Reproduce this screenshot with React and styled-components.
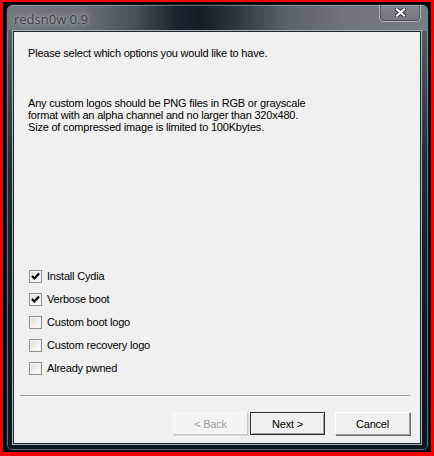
import React from 'react';
import styled, { createGlobalStyle } from 'styled-components';

const GlobalStyle = createGlobalStyle`
    html, body {
        margin: 0;
        padding: 0;
        overflow: hidden;
        background: #ff0000;
    }
`;

const Page = styled.div`
    width: 434px;
    height: 456px;
    box-sizing: border-box;
    padding: 2px 3px 4px 3px;
    background: #f40000;
    display: flex;
`;

const Desktop = styled.div`
    flex: 1;
    display: flex;
    padding: 2px 2px 1px 3px;
    background: #000;
`;

const Window = styled.div`
    flex: 1;
    display: flex;
    flex-direction: column;
    border-radius: 7px 7px 6px 6px;
    border: 1px solid #1a1e24;
    box-shadow: inset 0 0 0 1px rgba(190, 200, 210, 0.45);
    background: linear-gradient(180deg, #676c72 0%, #4d545d 10%, #222c38 35%, #101a25 70%, #0d1721 100%);
    overflow: hidden;
`;

const TitleBar = styled.div`
    height: 26px;
    display: flex;
    align-items: flex-start;
    padding-left: 7px;
    padding-right: 7px;
    background: linear-gradient(90deg, #71767c 0%, #6a6f75 18%, #4a515a 30%, #1c2431 40%, #141c28 46%, #2c343f 54%, #5b6168 66%, #6f747a 80%, #787d83 100%);
    box-shadow: inset 0 1px 0 rgba(200, 210, 220, 0.4);
`;

const Title = styled.span`
    flex: 1;
    margin-top: 6px;
    font-family: "Open Sans", "Noto Sans", sans-serif;
    font-size: 13px;
    line-height: 16px;
    color: #3a3f45;
    text-shadow: 0 0 7px rgba(225, 230, 235, 0.8), 0 0 3px rgba(225, 230, 235, 0.5);
`;

const CloseButton = styled.div`
    width: 42px;
    height: 18px;
    margin-top: -1px;
    box-sizing: border-box;
    display: flex;
    align-items: center;
    justify-content: center;
    border: 1px solid rgba(215, 222, 230, 0.55);
    border-top: none;
    border-radius: 0 0 5px 5px;
    background: linear-gradient(180deg, rgba(150, 156, 163, 0.35), rgba(110, 116, 123, 0.25));
    box-shadow: inset 0 0 0 1px rgba(40, 45, 52, 0.5);
`;

const Panel = styled.div`
    flex: 1;
    margin: 0 7px 6px 6px;
    display: flex;
    flex-direction: column;
    background: #f0f0f0;
    border: 1px solid #1d2732;
    box-shadow: 0 0 0 1px #a8b1bb;
    font-family: "Liberation Sans", Arial, sans-serif;
    font-size: 11px;
    letter-spacing: -0.2px;
    color: #000;
`;

const Heading = styled.p`
    margin: 15px 0 0 14px;
    line-height: 13px;
`;

const Notes = styled.p`
    margin: 37px 0 0 14px;
    line-height: 12px;
`;

const Options = styled.div`
    margin: auto 0 0 15px;
    display: flex;
    flex-direction: column;
`;

const OptionRow = styled.label`
    height: 23px;
    display: flex;
    align-items: center;
    gap: 5px;
    line-height: 13px;
`;

const Box = styled.span`
    width: 13px;
    height: 13px;
    box-sizing: border-box;
    display: flex;
    align-items: center;
    justify-content: center;
    border: 1px solid #8e8f8f;
    background: linear-gradient(135deg, #dcdcdc 0%, #f2f2f2 60%, #fbfbfb 100%);
    box-shadow: inset 0 0 0 1px #f4f4f4;
`;

const Separator = styled.div`
    margin: 15px 10px 0 6px;
    height: 0;
    border-top: 1px solid #a0a0a0;
    border-bottom: 1px solid #ffffff;
`;

const ButtonRow = styled.div`
    display: flex;
    justify-content: flex-end;
    margin: 15px 10px 8px 0;
`;

const Button = styled.button`
    width: 75px;
    height: 23px;
    margin-left: ${p => p.$gap}px;
    box-sizing: border-box;
    padding: 0;
    font-family: "Liberation Sans", Arial, sans-serif;
    font-size: 11px;
    letter-spacing: -0.2px;
    color: ${p => (p.disabled ? '#a0a0a0' : '#000')};
    background: ${p => (p.disabled ? '#f4f4f4' : '#f0f0f0')};
    border: 1px solid;
    border-color: ${p => (p.$default ? '#2b2b2b' : p.disabled ? '#f8f8f8 #c8c8c8 #c8c8c8 #f8f8f8' : '#ffffff #a0a0a0 #a0a0a0 #ffffff')};
    box-shadow: ${p => (p.$default ? 'inset 1px 1px 0 #fff, inset -1px -1px 0 #a0a0a0' : p.disabled ? '1px 1px 0 #d8d8d8' : '1px 1px 0 #696969')};
`;

const Check = () => (
    <svg width="9" height="9" viewBox="0 0 9 9">
        <path d="M1 4 L3.4 6.5 L8 1.5" fill="none" stroke="#000" strokeWidth="2.2" />
    </svg>
);

const CloseGlyph = () => (
    <svg width="11" height="9" viewBox="0 0 11 9">
        <path d="M2 1.5 L9 7.5 M9 1.5 L2 7.5" stroke="#2a2f36" strokeWidth="4" strokeLinecap="square" />
        <path d="M2 1.5 L9 7.5 M9 1.5 L2 7.5" stroke="#ffffff" strokeWidth="2.2" strokeLinecap="square" />
    </svg>
);

const options = [
    { label: 'Install Cydia', checked: true },
    { label: 'Verbose boot', checked: true },
    { label: 'Custom boot logo', checked: false },
    { label: 'Custom recovery logo', checked: false },
    { label: 'Already pwned', checked: false },
];

const App = () => (
    <Page>
        <GlobalStyle />
        <Desktop>
            <Window>
                <TitleBar>
                    <Title>redsn0w 0.9</Title>
                    <CloseButton><CloseGlyph /></CloseButton>
                </TitleBar>
                <Panel>
                    <Heading>Please select which options you would like to have.</Heading>
                    <Notes>
                        Any custom logos should be PNG files in RGB or grayscale<br />
                        format with an alpha channel and no larger than 320x480.<br />
                        Size of compressed image is limited to 100Kbytes.
                    </Notes>
                    <Options>
                        {options.map(o => (
                            <OptionRow key={o.label}>
                                <Box>{o.checked && <Check />}</Box>
                                {o.label}
                            </OptionRow>
                        ))}
                    </Options>
                    <Separator />
                    <ButtonRow>
                        <Button disabled>&lt; Back</Button>
                        <Button $default $gap={2}>Next &gt;</Button>
                        <Button $gap={10}>Cancel</Button>
                    </ButtonRow>
                </Panel>
            </Window>
        </Desktop>
    </Page>
);

export default App;
